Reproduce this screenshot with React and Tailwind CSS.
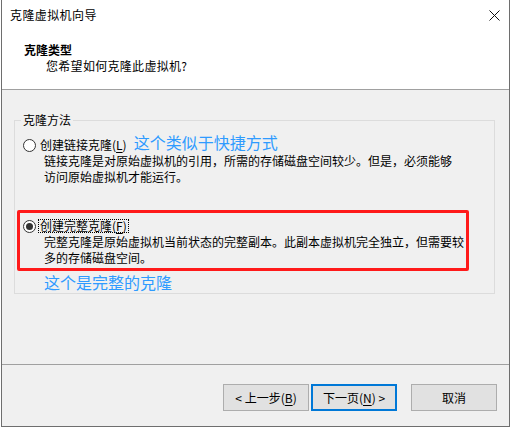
import React from "react";

const font = { fontFamily: '"Noto Sans CJK SC", "Noto Sans", sans-serif' };

function Radio({ checked }) {
  return (
    <span className="flex h-[13px] w-[13px] shrink-0 items-center justify-center rounded-full border border-[#333333] bg-white">
      {checked && <span className="h-[7px] w-[7px] rounded-full bg-[#333333]" />}
    </span>
  );
}

function Key({ k }) {
  return (
    <>
      (<span className="underline underline-offset-2">{k}</span>)
    </>
  );
}

function CloneWizard() {
  return (
    <div className="h-[428px] w-[512px] bg-white text-[12px] leading-[16px] text-black" style={font}>
      <div className="ml-[1px] flex h-[427px] w-[509px] flex-col border-x border-b border-[#6e6e6e]">
        {/* title bar */}
        <div className="flex h-[30px] items-center justify-between bg-white pl-[8px] pr-[9px]">
          <span className="tracking-[0.4px]">克隆虚拟机向导</span>
          <svg width="11" height="11" viewBox="0 0 11 11">
            <path d="M0.5 0.5 L10.5 10.5 M10.5 0.5 L0.5 10.5" stroke="#111" strokeWidth="1" />
          </svg>
        </div>

        {/* header */}
        <div className="h-[60px] border-b border-[#a0a0a0] bg-white pt-[12px]">
          <div className="pl-[22px] font-bold">克隆类型</div>
          <div className="pl-[44px] tracking-[0.3px]">您希望如何克隆此虚拟机?</div>
        </div>

        {/* body */}
        <div className="h-[274px] bg-[#f0f0f0] pt-[22px]">
          <fieldset className="ml-[12px] w-[481px] min-w-0 border border-[#dcdcdc] pb-[2px] pl-[6px] pr-[6px]">
            <legend className="px-[2px]">克隆方法</legend>
            <div className="pt-[9px]">
              <div className="flex h-[16px] items-center whitespace-nowrap">
                <span className="ml-[2px]"><Radio /></span>
                <span className="ml-[4px]">创建链接克隆<Key k="L" /></span>
                <span className="ml-[7px] -mt-[6px] text-[16px] leading-[20px] text-[#2f9bff]">这个类似于快捷方式</span>
              </div>
              <div className="whitespace-nowrap pl-[23px]">
                链接克隆是对原始虚拟机的引用，所需的存储磁盘空间较少。但是，必须能够
                <br />
                访问原始虚拟机才能运行。
              </div>
            </div>

            <div className="ml-[-4px] mt-[25px] w-[452px] rounded-[2px] border-[3px] border-[#ff1a1a] pb-[2px] pl-[1px] pt-[5px]">
              <div className="flex h-[16px] items-center whitespace-nowrap">
                <span className="ml-[2px]"><Radio checked /></span>
                <span className="ml-[2px] border border-dotted border-black px-[1px] leading-[12px]">创建完整克隆<Key k="F" /></span>
              </div>
              <div className="whitespace-nowrap pl-[23px]">
                完整克隆是原始虚拟机当前状态的完整副本。此副本虚拟机完全独立，但需要较
                <br />
                多的存储磁盘空间。
              </div>
            </div>
            <div className="mt-[2px] pl-[23px] text-[16px] leading-[18px] text-[#2f9bff]">这个是完整的克隆</div>
          </fieldset>
        </div>

        {/* footer */}
        <div className="flex-1 border-t border-[#a0a0a0] bg-[#f0f0f0] pt-[19px]">
          <div className="flex pl-[221px]">
            <button className="flex h-[27px] w-[86px] items-center justify-center border border-[#adadad] bg-[#e1e1e1]">
              &lt; 上一步<Key k="B" />
            </button>
            <button className="ml-[2px] flex h-[27px] w-[86px] items-center justify-center border-2 border-[#0078d7] bg-[#e1e1e1]">
              下一页<Key k="N" /> &gt;
            </button>
            <button className="ml-[14px] flex h-[27px] w-[86px] items-center justify-center border border-[#adadad] bg-[#e1e1e1]">
              取消
            </button>
          </div>
        </div>
      </div>
    </div>
  );
}

export default function App() {
  return <CloneWizard />;
}
